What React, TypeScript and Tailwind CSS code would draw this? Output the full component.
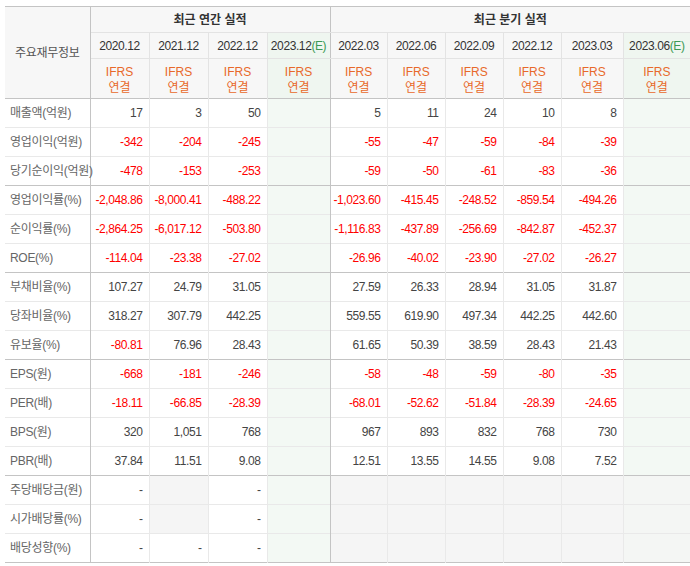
import React from "react"

type Row = { label: string; annual: string[]; quarter: string[]; group?: boolean; empty?: boolean[] }

const annualCols = ["2020.12", "2021.12", "2022.12", "2023.12"]
const quarterCols = ["2022.03", "2022.06", "2022.09", "2022.12", "2023.03", "2023.06"]

const rows: Row[] = [
  { label: "매출액(억원)", annual: ["17", "3", "50"], quarter: ["5", "11", "24", "10", "8"] },
  { label: "영업이익(억원)", annual: ["-342", "-204", "-245"], quarter: ["-55", "-47", "-59", "-84", "-39"] },
  { label: "당기순이익(억원)", annual: ["-478", "-153", "-253"], quarter: ["-59", "-50", "-61", "-83", "-36"] },
  { label: "영업이익률(%)", group: true, annual: ["-2,048.86", "-8,000.41", "-488.22"], quarter: ["-1,023.60", "-415.45", "-248.52", "-859.54", "-494.26"] },
  { label: "순이익률(%)", annual: ["-2,864.25", "-6,017.12", "-503.80"], quarter: ["-1,116.83", "-437.89", "-256.69", "-842.87", "-452.37"] },
  { label: "ROE(%)", annual: ["-114.04", "-23.38", "-27.02"], quarter: ["-26.96", "-40.02", "-23.90", "-27.02", "-26.27"] },
  { label: "부채비율(%)", group: true, annual: ["107.27", "24.79", "31.05"], quarter: ["27.59", "26.33", "28.94", "31.05", "31.87"] },
  { label: "당좌비율(%)", annual: ["318.27", "307.79", "442.25"], quarter: ["559.55", "619.90", "497.34", "442.25", "442.60"] },
  { label: "유보율(%)", annual: ["-80.81", "76.96", "28.43"], quarter: ["61.65", "50.39", "38.59", "28.43", "21.43"] },
  { label: "EPS(원)", group: true, annual: ["-668", "-181", "-246"], quarter: ["-58", "-48", "-59", "-80", "-35"] },
  { label: "PER(배)", annual: ["-18.11", "-66.85", "-28.39"], quarter: ["-68.01", "-52.62", "-51.84", "-28.39", "-24.65"] },
  { label: "BPS(원)", annual: ["320", "1,051", "768"], quarter: ["967", "893", "832", "768", "730"] },
  { label: "PBR(배)", annual: ["37.84", "11.51", "9.08"], quarter: ["12.51", "13.55", "14.55", "9.08", "7.52"] },
  { label: "주당배당금(원)", group: true, annual: ["-", "", "-"], quarter: ["", "", "", "", ""], empty: [false, true, false] },
  { label: "시가배당률(%)", annual: ["-", "", "-"], quarter: ["", "", "", "", ""], empty: [false, true, false] },
  { label: "배당성향(%)", annual: ["-", "-", "-"], quarter: ["", "", "", "", ""], empty: [false, false, false] },
]

function Val({ v }: { v: string }) {
  const neg = v.startsWith("-") && v.length > 1
  return <span className={`tracking-[-0.4px] ${neg ? "text-[#ff0000]" : "text-[#444]"}`}>{v}</span>
}

export default function App() {
  return (
    <div className="bg-white w-[690px] h-[566px] pt-[6px] pl-[5px] font-['Liberation_Sans','Noto_Sans_CJK_KR',sans-serif] text-[12px]">
      <table className="border-collapse table-fixed w-[685px]">
        <colgroup>
          <col className="w-[85px]" />
          <col className="w-[59px]" />
          <col className="w-[59px]" />
          <col className="w-[59px]" />
          <col className="w-[63px]" />
          <col className="w-[57px]" />
          <col className="w-[58px]" />
          <col className="w-[58px]" />
          <col className="w-[58px]" />
          <col className="w-[62px]" />
          <col className="w-[67px]" />
        </colgroup>
        <thead>
          <tr className="h-[26px] border-t border-[#c4c4c4]">
            <th rowSpan={3} className="bg-[#f7f7f7] border-r border-[#c4c4c4] border-b font-normal text-[#555] tracking-tight">
              주요재무정보
            </th>
            <th colSpan={4} className="bg-[#f7f7f7] border-r border-[#c4c4c4] border-b border-b-[#e3e3e3] font-bold text-[#333]">
              최근 연간 실적
            </th>
            <th colSpan={6} className="bg-[#f7f7f7] border-b border-[#e3e3e3] font-bold text-[#333]">
              최근 분기 실적
            </th>
          </tr>
          <tr className="h-[26px]">
            {annualCols.map((c, i) => (
              <th
                key={c}
                className={`font-normal text-[#333] tracking-[-0.4px] border-b border-[#e3e3e3] ${i === 3 ? "bg-[#eff6f0] border-r border-r-[#c4c4c4]" : "bg-[#f7f7f7] border-r"}`}
              >
                {c}
                {i === 3 && <span className="text-[#3c9a55]">(E)</span>}
              </th>
            ))}
            {quarterCols.map((c, i) => (
              <th
                key={c}
                className={`font-normal text-[#333] tracking-[-0.4px] border-b border-[#e3e3e3] ${i === 5 ? "bg-[#eff6f0]" : "bg-[#f7f7f7] border-r"}`}
              >
                {c}
                {i === 5 && <span className="text-[#3c9a55]">(E)</span>}
              </th>
            ))}
          </tr>
          <tr className="h-[40px] border-b border-[#c4c4c4]">
            {[...annualCols, ...quarterCols].map((c, i) => (
              <th
                key={c}
                className={`font-normal text-[#e8692a] leading-[16px] pt-[2px] ${i === 3 || i === 9 ? "bg-[#eff6f0]" : "bg-[#f7f7f7]"} ${i === 3 ? "border-r border-[#c4c4c4]" : i === 9 ? "" : "border-r border-[#e3e3e3]"}`}
              >
                IFRS
                <br />
                연결
              </th>
            ))}
          </tr>
        </thead>
        <tbody>
          {rows.map((r) => (
            <tr key={r.label} className={`h-[29px] ${r.group ? "border-t border-[#c4c4c4]" : "border-t border-[#e9e9e9]"}`}>
              <td className="pl-[5px] text-[#666] border-r border-[#c4c4c4] tracking-tight whitespace-nowrap">{r.label}</td>
              {r.annual.map((v, i) => (
                <td
                  key={i}
                  className={`text-right pr-[6px] border-r border-[#e9e9e9] whitespace-nowrap ${r.empty && r.empty[i] ? "bg-[#f5f5f5]" : ""}`}
                >
                  <Val v={v} />
                </td>
              ))}
              <td className="bg-[#f3f9f4] border-r border-[#c4c4c4]" />
              {r.quarter.map((v, i) => (
                <td key={i} className={`text-right pr-[6px] border-r border-[#e9e9e9] whitespace-nowrap ${r.empty ? "bg-[#f5f5f5]" : ""}`}>
                  <Val v={v} />
                </td>
              ))}
              <td className={r.empty ? "bg-[#f4f6f4]" : "bg-[#f3f9f4]"} />
            </tr>
          ))}
          <tr className="border-t border-[#c4c4c4]" />
        </tbody>
      </table>
    </div>
  )
}
